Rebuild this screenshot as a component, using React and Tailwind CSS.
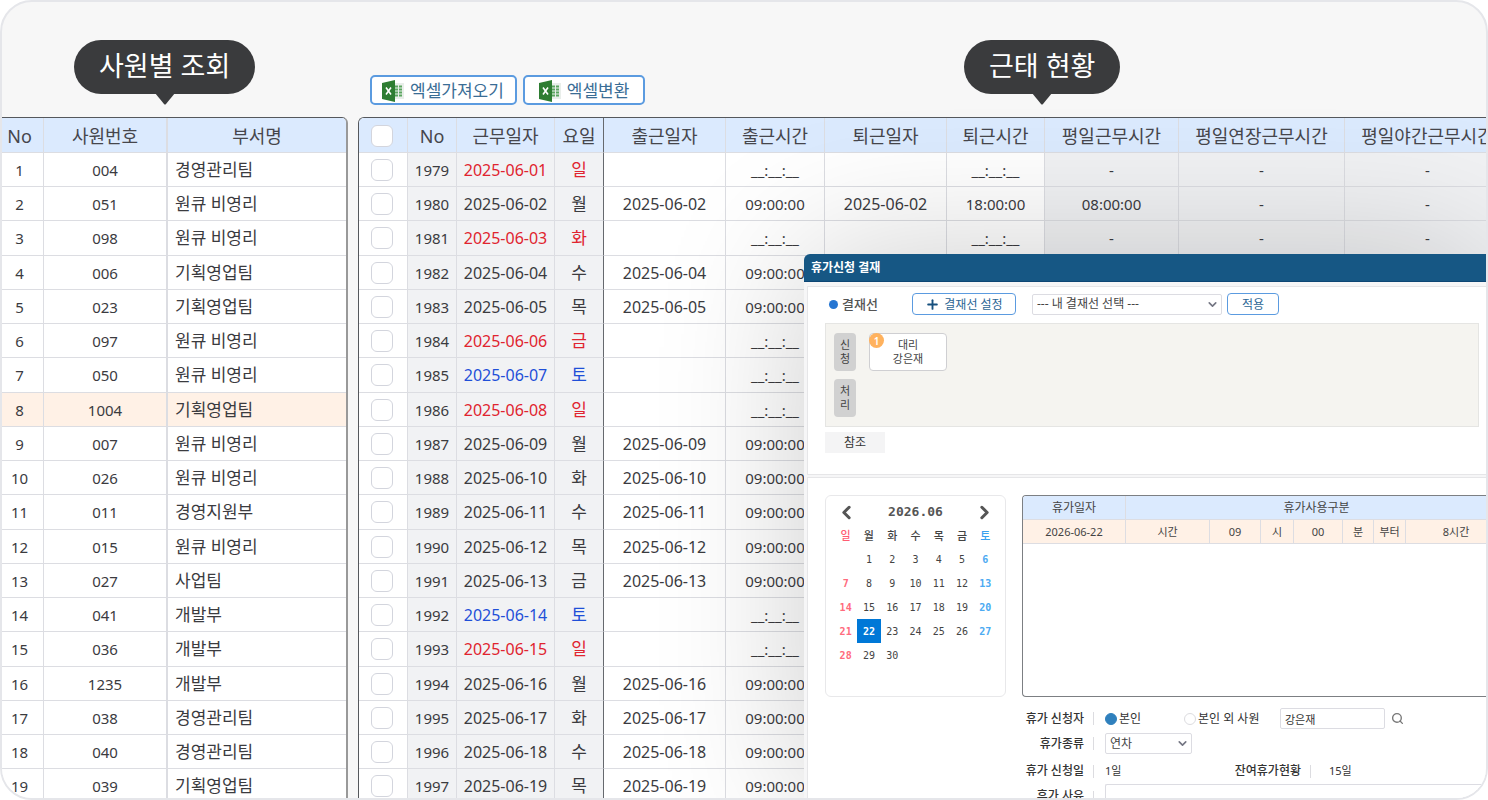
import React, { useState } from 'react';
import { ChevronDown, ChevronLeft, ChevronRight, Plus, Search } from 'lucide-react';
import clsx from 'clsx';

const employees = [
    ['004', '경영관리팀'],
    ['051', '원큐 비영리'],
    ['098', '원큐 비영리'],
    ['006', '기획영업팀'],
    ['023', '기획영업팀'],
    ['097', '원큐 비영리'],
    ['050', '원큐 비영리'],
    ['1004', '기획영업팀'],
    ['007', '원큐 비영리'],
    ['026', '원큐 비영리'],
    ['011', '경영지원부'],
    ['015', '원큐 비영리'],
    ['027', '사업팀'],
    ['041', '개발부'],
    ['036', '개발부'],
    ['1235', '개발부'],
    ['038', '경영관리팀'],
    ['040', '경영관리팀'],
    ['039', '기획영업팀'],
];

const dayNames = ['일', '월', '화', '수', '목', '금', '토'];
const holidays = [1, 3, 6, 8, 15];
const saturdays = [7, 14];
const lastClosedDay = 3;

// --- Attendance rows for June 1 - 19, clock-outs are filled in up to the last closed day ---
const attendance = employees.map((_, i) => {
    const day = i + 1;
    const off = holidays.includes(day) || saturdays.includes(day);
    const closed = day <= lastClosedDay;
    const date = `2025-06-${String(day).padStart(2, '0')}`;
    return {
        no: 1979 + i,
        date,
        dayName: dayNames[i % 7],
        tone: holidays.includes(day) ? 'text-[#e0242f]' : saturdays.includes(day) ? 'text-[#1f4fd8]' : '',
        inDate: off ? '' : date,
        inTime: off ? '__:__:__' : '09:00:00',
        outDate: off || !closed ? '' : date,
        outTime: !closed ? '' : off ? '__:__:__' : '18:00:00',
        work: !closed ? '' : off ? '-' : '08:00:00',
        extra: closed ? '-' : '',
    };
});

const weeks = [
    ['', 1, 2, 3, 4, 5, 6],
    [7, 8, 9, 10, 11, 12, 13],
    [14, 15, 16, 17, 18, 19, 20],
    [21, 22, 23, 24, 25, 26, 27],
    [28, 29, 30, '', '', '', ''],
];

const rowClass = 'h-[34px] [&:nth-child(4n-1)]:h-[35px]';
const headCell = 'h-[35px] border-r border-b border-[#dcdde2] bg-[#dbeafe] p-0 pt-px text-[18px] leading-6 font-normal whitespace-nowrap text-[#46464c]';
const cell = 'border-r border-b border-[#dcdde2] p-0 text-center text-[15px] leading-6 whitespace-nowrap';
const smallButton = 'flex h-[22px] items-center justify-center gap-1 rounded border border-[#5b9be0] bg-white text-[12px] leading-4 text-[#2c6695]';

const ExcelIcon = () => (
    <svg width="22" height="22" viewBox="0 0 22 22" aria-hidden="true">
        <rect x="11" y="3" width="11" height="16" fill="#e9eeea" />
        <path d="M13 6.500h3M17 6.500h3M13 9.500h3M17 9.500h3M13 12.500h3M17 12.500h3M13 15.500h3M17 15.500h3" stroke="#5aa55f" strokeWidth="1.800" />
        <path d="M0 3 13 0v22L0 19z" fill="#2e7d32" />
        <path d="m4 7.500 5 7M9 7.500l-5 7" stroke="#fff" strokeWidth="1.600" fill="none" />
    </svg>
);

const Bubble = ({ className, children }) => (
    <div className={clsx('absolute top-[38px] z-10 flex h-[54px] items-center justify-center rounded-full bg-[#3a3b3d] px-[25px] text-[27px] leading-8 whitespace-nowrap text-white', className)}>
        <span className="pb-[2px]">{children}</span>
        <svg className="absolute top-full left-1/2 -mt-px -translate-x-1/2" width="20" height="12" viewBox="0 0 20 12" aria-hidden="true">
            <path d="M0 0h20l-9 11q-1 1-2 0z" fill="#3a3b3d" />
        </svg>
    </div>
);

const ExcelButton = ({ children, className }) => (
    <button type="button" className={clsx('flex h-[30px] items-center gap-[6px] rounded-[5px] border-2 border-[#5b9be0] bg-white pt-px text-[17px] leading-5 text-[#3a6d95]', className)}>
        <ExcelIcon />
        {children}
    </button>
);

const Check = ({ label }) => (
    <input type="checkbox" aria-label={label} className="ml-3 block size-[22px] appearance-none rounded-md border border-[#d3d5dd] bg-white checked:bg-[#2f80bd]" />
);

const EmployeeTable = () => (
    <div className="w-[346px] shrink-0 overflow-hidden rounded-tr-md border-t border-r-2 border-t-[#55585c] border-r-[#999] bg-white">
        <table className="w-full table-fixed border-separate border-spacing-0">
            <colgroup>
                <col className="w-[42px]" />
                <col className="w-[124px]" />
                <col />
            </colgroup>
            <thead>
                <tr>
                    <th className={clsx(headCell, 'pr-[6px] text-[16px]')}>No</th>
                    <th className={clsx(headCell, 'border-r-2')}>사원번호</th>
                    <th className={clsx(headCell, 'border-r-0')}>부서명</th>
                </tr>
            </thead>
            <tbody>
                {employees.map(([id, team], i) => (
                    <tr key={id} className={clsx(rowClass, id === '1004' && 'bg-[#fff1e6]')}>
                        <td className={clsx(cell, 'pr-[6px]')}>{i + 1}</td>
                        <td className={clsx(cell, 'border-r-2')}>{id}</td>
                        <td className="border-b border-[#dcdde2] p-0 pl-[7px] text-[17px] leading-6 whitespace-nowrap">{team}</td>
                    </tr>
                ))}
            </tbody>
        </table>
    </div>
);

const AttendanceTable = () => (
    <div className="min-w-0 flex-1 overflow-hidden rounded-tl-md border-t border-l border-[#55585c] bg-white">
        <table className="w-[1152px] table-fixed border-separate border-spacing-0">
            <colgroup>
                <col className="w-[49px]" />
                <col className="w-[49px]" />
                <col className="w-[98px]" />
                <col className="w-[49px]" />
                <col className="w-[122px]" />
                <col className="w-[99px]" />
                <col className="w-[122px]" />
                <col className="w-[98px]" />
                <col className="w-[134px]" />
                <col className="w-[166px]" />
                <col className="w-[166px]" />
            </colgroup>
            <thead>
                <tr>
                    <th className={headCell}><Check label="전체 선택" /></th>
                    <th className={clsx(headCell, 'text-[16px]')}>No</th>
                    <th className={headCell}>근무일자</th>
                    <th className={clsx(headCell, 'border-r-[#66696e]')}>요일</th>
                    <th className={headCell}>출근일자</th>
                    <th className={headCell}>출근시간</th>
                    <th className={headCell}>퇴근일자</th>
                    <th className={headCell}>퇴근시간</th>
                    <th className={headCell}>평일근무시간</th>
                    <th className={headCell}>평일연장근무시간</th>
                    <th className={headCell}>평일야간근무시간</th>
                </tr>
            </thead>
            <tbody>
                {attendance.map((row) => (
                    <tr key={row.no} className={rowClass}>
                        <td className={cell}><Check label={`${row.no} 선택`} /></td>
                        <td className={clsx(cell, 'bg-[#f1f2f4]')}>{row.no}</td>
                        <td className={clsx(cell, 'bg-[#f1f2f4] text-[16px]', row.tone)}>{row.date}</td>
                        <td className={clsx(cell, 'border-r-[#66696e] bg-[#f1f2f4] text-[17px]', row.tone)}>{row.dayName}</td>
                        <td className={clsx(cell, 'text-[16px]')}>{row.inDate}</td>
                        <td className={cell}>{row.inTime}</td>
                        <td className={clsx(cell, 'text-[16px]')}>{row.outDate}</td>
                        <td className={cell}>{row.outTime}</td>
                        <td className={clsx(cell, 'bg-[#f1f2f4]')}>{row.work}</td>
                        <td className={clsx(cell, 'bg-[#f1f2f4]')}>{row.extra}</td>
                        <td className={clsx(cell, 'bg-[#f1f2f4]')}>{row.extra}</td>
                    </tr>
                ))}
            </tbody>
        </table>
    </div>
);

const Select = ({ label, id, className, children }) => (
    <div className={clsx('relative', className)}>
        <select id={id} aria-label={label} className="block h-[21px] w-full appearance-none rounded-xs border border-[#dcdce2] bg-white pr-5 pl-1 text-[12px] leading-4 text-[#444]">
            {children}
        </select>
        <ChevronDown className="pointer-events-none absolute top-1 right-[3px] text-[#747683]" size={13} strokeWidth={3} />
    </div>
);

const ApprovalLine = () => (
    <section className="border border-r-0 border-[#e6e6e8] bg-white pt-[6px] pr-[7px] pb-[21px] pl-[17px]">
        <div className="flex h-[22px] items-center">
            <h3 className="flex w-[87px] items-center gap-1 pl-1 text-[13px] leading-4 font-medium text-[#555]">
                <span className="size-[9px] rounded-full bg-[#2676d2]" />
                결재선
            </h3>
            <button type="button" className={clsx(smallButton, 'w-[104px] pt-px')}>
                <Plus size={15} strokeWidth={3} className="text-[#17507e]" />
                결재선 설정
            </button>
            <Select label="내 결재선 선택" className="ml-4 w-[190px]">
                <option>--- 내 결재선 선택 ---</option>
            </Select>
            <button type="button" className={clsx(smallButton, 'ml-[5px] w-[52px] pt-px')}>적용</button>
        </div>
        <div className="mt-2 flex flex-col gap-2 border border-[#e5e5e3] bg-[#f5f4f0] px-2 py-[9px] text-[11px] leading-[14px] text-[#444]">
            <div className="flex gap-[13px]">
                <span className="flex h-[38px] w-[22px] flex-col items-center justify-center rounded bg-[#d1d1d1]">
                    <span>신</span>
                    <span>청</span>
                </span>
                <div className="relative flex h-[38px] w-[78px] flex-col items-center justify-center rounded border border-[#cfcfd2] bg-white">
                    <span className="absolute -top-px -left-px flex size-[15px] items-center justify-center rounded-full bg-[#ffb25e] text-[10px] leading-3 font-semibold text-white">1</span>
                    <span>대리</span>
                    <span>강은재</span>
                </div>
            </div>
            <span className="flex h-[38px] w-[22px] flex-col items-center justify-center rounded bg-[#d1d1d1]">
                <span>처</span>
                <span>리</span>
            </span>
        </div>
        <button type="button" className="mt-[5px] block h-[21px] w-[60px] bg-[#f4f4f5] text-[12px] leading-4 text-[#333]">참조</button>
    </section>
);

const Calendar = () => {
    const [selected, setSelected] = useState(22);

    return (
        <div className="h-[202px] w-[181px] shrink-0 rounded-md border border-[#e8e8ea] px-[8px] pt-1 font-['DejaVu_Sans_Mono','Noto_Sans_CJK_KR',monospace] text-[10px] text-[#444]">
            <div className="flex h-6 items-center justify-between px-[2px] text-[#555]">
                <button type="button" aria-label="이전 달"><ChevronLeft size={21} strokeWidth={3.5} /></button>
                <strong className="text-[13px] leading-4">2026.06</strong>
                <button type="button" aria-label="다음 달"><ChevronRight size={21} strokeWidth={3.5} /></button>
            </div>
            <table className="w-full table-fixed border-separate border-spacing-0 text-center">
                <thead>
                    <tr className="h-[23px]">
                        {dayNames.map((name, i) => (
                            <th key={name} className={clsx('p-0 pt-[2px] text-[11px] leading-4 font-medium', i === 0 && 'text-[#ff5d72]', i === 6 && 'text-[#3aa0ee]')}>{name}</th>
                        ))}
                    </tr>
                </thead>
                <tbody>
                    {weeks.map((week, w) => (
                        <tr key={w} className="h-6">
                            {week.map((day, i) => (
                                <td key={i} className="p-0">
                                    {day && (
                                        <button
                                            type="button"
                                            onClick={() => setSelected(day)}
                                            className={clsx(
                                                'block h-6 w-full pt-px leading-4',
                                                day === selected ? 'bg-[#0078d7] font-bold text-white' : i === 0 ? 'font-bold text-[#ff6b7d]' : i === 6 ? 'font-bold text-[#4caaf2]' : ''
                                            )}
                                        >
                                            {day}
                                        </button>
                                    )}
                                </td>
                            ))}
                        </tr>
                    ))}
                </tbody>
            </table>
        </div>
    );
};

const usageCell = 'border-r border-b border-[#dddde2] bg-[#fff1e6] p-0 font-normal';

const UsageTable = () => (
    <div className="h-[202px] min-w-0 flex-1 overflow-hidden rounded-l border border-r-0 border-[#7c7f83]">
        <table className="w-[484px] table-fixed border-separate border-spacing-0 text-center text-[11px] leading-4 text-[#444]">
            <colgroup>
                <col className="w-[103px]" />
                <col className="w-[84px]" />
                <col className="w-[51px]" />
                <col className="w-[33px]" />
                <col className="w-[49px]" />
                <col className="w-[31px]" />
                <col className="w-[32px]" />
                <col />
            </colgroup>
            <thead>
                <tr className="h-6 text-[12px]">
                    <th className="border-r border-b border-[#dddde2] bg-[#dbeafe] p-0 pt-px font-normal">휴가일자</th>
                    <th colSpan={7} className="border-b border-[#dddde2] bg-[#dbeafe] p-0 pt-px font-normal">휴가사용구분</th>
                </tr>
            </thead>
            <tbody>
                <tr className="h-6">
                    {['2026-06-22', '시간', '09', '시', '00', '분', '부터', '8시간'].map((text) => (
                        <td key={text} className={usageCell}>{text}</td>
                    ))}
                </tr>
            </tbody>
        </table>
    </div>
);

const Divider = ({ className }) => <span className={clsx('h-[13px] w-px bg-[#dcdce0]', className)} />;

const formLabel = 'w-[64px] shrink-0 text-right font-medium whitespace-nowrap text-[#333]';
const radio = 'size-[12px] appearance-none rounded-full border border-[#dcdce0] bg-white checked:border-[#2f80bd] checked:bg-[#2f80bd]';

const RequestForm = () => {
    const [target, setTarget] = useState('self');

    return (
        <form className="mt-[11px] ml-[195px] flex flex-col gap-1 text-[12px] leading-4 text-[#333]">
            <div className="flex h-[21px] items-center">
                <span className={formLabel}>휴가 신청자</span>
                <Divider className="mr-[11px] ml-[9px]" />
                <label className="flex w-[79px] items-center gap-[2px]">
                    <input type="radio" name="target" className={radio} checked={target === 'self'} onChange={() => setTarget('self')} />
                    본인
                </label>
                <label className="flex w-[96px] items-center gap-[2px] whitespace-nowrap">
                    <input type="radio" name="target" className={radio} checked={target === 'other'} onChange={() => setTarget('other')} />
                    본인 외 사원
                </label>
                <input type="text" aria-label="사원명" defaultValue="강은재" className="h-[21px] w-[105px] rounded-xs border border-[#dcdce2] bg-white px-1 text-[11px]" />
                <button type="button" aria-label="사원 검색" className="ml-[6px] text-[#777]"><Search size={13} strokeWidth={2.5} /></button>
            </div>
            <div className="flex h-[21px] items-center">
                <label htmlFor="leave-type" className={formLabel}>휴가종류</label>
                <Divider className="mr-[11px] ml-[9px]" />
                <Select id="leave-type" className="w-[87px]">
                    <option>연차</option>
                </Select>
            </div>
            <div className="flex h-[26px] items-center">
                <span className={formLabel}>휴가 신청일</span>
                <Divider className="mr-[11px] ml-[9px]" />
                <span className="w-[124px] text-[11px]">1일</span>
                <span className="w-[72px] text-right font-medium whitespace-nowrap">잔여휴가현황</span>
                <Divider className="mr-[18px] ml-[9px]" />
                <span className="text-[11px]">15일</span>
            </div>
            <div className="flex items-start">
                <label htmlFor="reason" className={formLabel}>휴가 사유</label>
                <Divider className="mt-[3px] mr-[11px] ml-[9px]" />
                <textarea id="reason" className="-mt-1 h-12 min-w-0 flex-1 resize-none rounded-xs border border-r-0 border-[#dcdce2] bg-white p-1" />
            </div>
        </form>
    );
};

const LeaveDialog = () => (
    <div role="dialog" aria-label="휴가신청 결재" className="absolute top-[252px] right-0 bottom-0 left-[802px] z-20 flex flex-col overflow-hidden rounded-tl-md bg-[#f6f6f7] shadow-[0_0_150px_rgba(0,0,0,0.2)]">
        <h2 className="flex h-7 shrink-0 items-center border-b border-[#0d4674] bg-[#165784] px-[7px] text-[12px] leading-4 font-bold text-white">휴가신청 결재</h2>
        <div className="flex flex-1 flex-col gap-[2px] pt-1 pl-[3px]">
            <ApprovalLine />
            <section className="flex-1 border border-r-0 border-[#e6e6e8] bg-white pt-[17px] pl-[17px]">
                <div className="flex gap-4">
                    <Calendar />
                    <UsageTable />
                </div>
                <RequestForm />
            </section>
        </div>
    </div>
);

const App = () => (
    <main className="relative flex h-screen flex-col overflow-hidden rounded-[32px] border-2 border-[#e5e6ea] bg-[#f7f7f7] font-['Noto_Sans','Noto_Sans_CJK_KR',sans-serif] text-[#3b3b3f]">
        <Bubble className="left-[72px]">사원별 조회</Bubble>
        <Bubble className="left-[962px]">근태 현황</Bubble>
        <div className="flex h-[115px] shrink-0 items-end gap-[6px] pb-3 pl-[368px]">
            <ExcelButton className="pr-[11px] pl-[10px]">엑셀가져오기</ExcelButton>
            <ExcelButton className="px-[14px]">엑셀변환</ExcelButton>
        </div>
        <div className="flex min-h-0 flex-1 gap-[10px]">
            <EmployeeTable />
            <AttendanceTable />
        </div>
        <LeaveDialog />
    </main>
);

export default App;
